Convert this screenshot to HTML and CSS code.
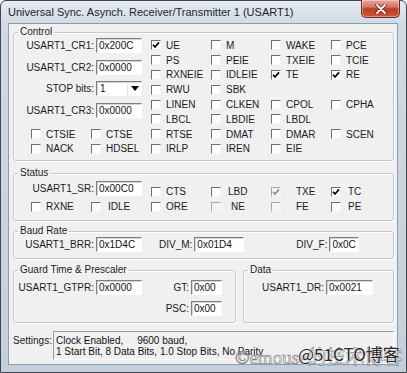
FILE: index.html
```html
<!DOCTYPE html>
<html lang="en">
<head>
    <meta charset="UTF-8">
    <title>USART1</title>
    <link rel="stylesheet" href="styles.css">
</head>
<body>
    <div class="window">
        <div class="titlebar">
            <span class="title">Universal Sync. Asynch. Receiver/Transmitter 1 (USART1)</span>
            <button class="close">
                <svg width="12" height="10" viewBox="0 0 12 10">
                    <path d="M2 1 L10 9 M10 1 L2 9" stroke="#5a2018" stroke-width="3.4" stroke-linecap="round"/>
                    <path d="M2 1 L10 9 M10 1 L2 9" stroke="#fff" stroke-width="1.8" stroke-linecap="round"/>
                </svg>
            </button>
        </div>

        <div class="client">
            <!-- Control -->
            <fieldset class="group control">
                <legend>Control</legend>
                <div class="group-body">
                    <div class="control-top">
                        <div class="fields">
                            <div class="field"><span class="lbl">USART1_CR1:</span><span class="edit">0x200C</span></div>
                            <div class="field"><span class="lbl">USART1_CR2:</span><span class="edit">0x0000</span></div>
                            <div class="field"><span class="lbl">STOP bits:</span><span class="combo"><span class="combo-val">1</span><span class="arrow"></span></span></div>
                            <div class="field"><span class="lbl">USART1_CR3:</span><span class="edit">0x0000</span></div>
                        </div>
                        <div class="checks cols4">
                            <label class="chk"><span class="box"><svg viewBox="0 0 8 8"><path d="M1 3.8 L3 6 L7 1.4"/></svg></span>UE</label>
                            <label class="chk"><span class="box"></span>M</label>
                            <label class="chk"><span class="box"></span>WAKE</label>
                            <label class="chk"><span class="box"></span>PCE</label>

                            <label class="chk"><span class="box"></span>PS</label>
                            <label class="chk"><span class="box"></span>PEIE</label>
                            <label class="chk"><span class="box"></span>TXEIE</label>
                            <label class="chk"><span class="box"></span>TCIE</label>

                            <label class="chk"><span class="box"></span>RXNEIE</label>
                            <label class="chk"><span class="box"></span>IDLEIE</label>
                            <label class="chk"><span class="box"><svg viewBox="0 0 8 8"><path d="M1 3.8 L3 6 L7 1.4"/></svg></span>TE</label>
                            <label class="chk"><span class="box"><svg viewBox="0 0 8 8"><path d="M1 3.8 L3 6 L7 1.4"/></svg></span>RE</label>

                            <label class="chk"><span class="box"></span>RWU</label>
                            <label class="chk"><span class="box"></span>SBK</label>
                            <span></span>
                            <span></span>

                            <label class="chk"><span class="box"></span>LINEN</label>
                            <label class="chk"><span class="box"></span>CLKEN</label>
                            <label class="chk"><span class="box"></span>CPOL</label>
                            <label class="chk"><span class="box"></span>CPHA</label>

                            <label class="chk"><span class="box"></span>LBCL</label>
                            <label class="chk"><span class="box"></span>LBDIE</label>
                            <label class="chk"><span class="box"></span>LBDL</label>
                            <span></span>
                        </div>
                    </div>
                    <div class="checks cols6">
                        <label class="chk"><span class="box"></span>CTSIE</label>
                        <label class="chk"><span class="box"></span>CTSE</label>
                        <label class="chk"><span class="box"></span>RTSE</label>
                        <label class="chk"><span class="box"></span>DMAT</label>
                        <label class="chk"><span class="box"></span>DMAR</label>
                        <label class="chk"><span class="box"></span>SCEN</label>

                        <label class="chk"><span class="box"></span>NACK</label>
                        <label class="chk"><span class="box"></span>HDSEL</label>
                        <label class="chk"><span class="box"></span>IRLP</label>
                        <label class="chk"><span class="box"></span>IREN</label>
                        <label class="chk"><span class="box"></span>EIE</label>
                        <span></span>
                    </div>
                </div>
            </fieldset>

            <!-- Status -->
            <fieldset class="group status">
                <legend>Status</legend>
                <div class="group-body">
                    <div class="status-grid">
                        <div class="field wide"><span class="lbl">USART1_SR:</span><span class="edit">0x00C0</span></div>
                        <label class="chk low"><span class="box"></span>CTS</label>
                        <label class="chk low pad1"><span class="box"></span>LBD</label>
                        <label class="chk low pad3 dis"><span class="box"><svg viewBox="0 0 8 8"><path d="M1 3.8 L3 6 L7 1.4"/></svg></span>TXE</label>
                        <label class="chk low pad1"><span class="box"><svg viewBox="0 0 8 8"><path d="M1 3.8 L3 6 L7 1.4"/></svg></span>TC</label>

                        <label class="chk"><span class="box"></span>RXNE</label>
                        <label class="chk pad1"><span class="box"></span>IDLE</label>
                        <label class="chk"><span class="box"></span>ORE</label>
                        <label class="chk pad2 dis"><span class="box"></span>NE</label>
                        <label class="chk pad3 dis"><span class="box"></span>FE</label>
                        <label class="chk pad1"><span class="box"></span>PE</label>
                    </div>
                </div>
            </fieldset>

            <!-- Baud Rate -->
            <fieldset class="group baud">
                <legend>Baud Rate</legend>
                <div class="group-body row">
                    <div class="field wide"><span class="lbl">USART1_BRR:</span><span class="edit">0x1D4C</span></div>
                    <div class="field div-m"><span class="lbl">DIV_M:</span><span class="edit w50">0x01D4</span></div>
                    <div class="field div-f"><span class="lbl">DIV_F:</span><span class="edit w30">0x0C</span></div>
                </div>
            </fieldset>

            <div class="bottom-groups">
                <!-- Guard Time & Prescaler -->
                <fieldset class="group guard">
                    <legend>Guard Time &amp; Prescaler</legend>
                    <div class="group-body row">
                        <div class="field wide"><span class="lbl">USART1_GTPR:</span><span class="edit">0x0000</span></div>
                        <div class="small-fields">
                            <div class="field"><span class="lbl">GT:</span><span class="edit w31">0x00</span></div>
                            <div class="field"><span class="lbl">PSC:</span><span class="edit w31">0x00</span></div>
                        </div>
                    </div>
                </fieldset>

                <!-- Data -->
                <fieldset class="group data">
                    <legend>Data</legend>
                    <div class="group-body row">
                        <div class="field"><span class="lbl">USART1_DR:</span><span class="edit w47">0x0021</span></div>
                    </div>
                </fieldset>
            </div>

            <div class="settings">
                <span class="settings-lbl">Settings:</span>
                <div class="settings-box">Clock Enabled,     9600 baud,
1 Start Bit, 8 Data Bits, 1.0 Stop Bits, No Parity</div>
            </div>
        </div>

        <div class="wm-back">©emouse的技术博客</div>
        <div class="wm-front">@51CTO博客</div>
    </div>
</body>
</html>
```

FILE: styles.css
```css
* {
    box-sizing: border-box;
}

body {
    margin: 0;
    font-family: "Liberation Sans", Arial, sans-serif;
    font-size: 10px;
    color: #1b1b1b;
    background: #ffffff;
}

.window {
    position: relative;
    width: 407px;
    height: 373px;
    border: 1px solid #40474f;
    border-radius: 6px 6px 0 0;
    background: linear-gradient(#e4ebf3, #d0dae5 24px, #c3cfdc);
    padding: 0 8px 7px 7px;
    display: flex;
    flex-direction: column;
}

.titlebar {
    height: 22px;
    display: flex;
    align-items: center;
}

.title {
    font-size: 11px;
    color: #1e1e2c;
    white-space: nowrap;
}

.close {
    align-self: flex-start;
    margin: -1px -2px 0 auto;
    width: 39px;
    height: 18px;
    padding: 0;
    border: 1px solid #6e2c23;
    border-top: none;
    border-radius: 0 0 5px 5px;
    background: linear-gradient(#e8a99c, #d47a66 40%, #bf3e24 52%, #c9563c);
    display: flex;
    align-items: center;
    justify-content: center;
    box-shadow: inset 0 0 0 1px rgba(255, 255, 255, 0.35);
}

.client {
    flex: 1;
    background: #f0f0f0;
    border: 1px solid #8f9dab;
    padding: 0 3px 0 4px;
    display: flex;
    flex-direction: column;
}

/* group boxes */
.group {
    margin: 0;
    padding: 0;
    min-width: 0;
    border: 1px solid #c2c7cc;
    border-radius: 3px;
    box-shadow: inset 1px 1px 0 #ffffff, 1px 1px 0 #ffffff;
}

.group legend {
    margin-left: 4px;
    padding: 0 2px;
    line-height: 12px;
}

.group-body {
    padding-left: 17px;
}

.row {
    display: flex;
    align-items: flex-start;
}

.control {
    margin-top: 2px;
}

.control .group-body {
    padding-bottom: 4px;
}

.status {
    margin-top: 6px;
}

.status .group-body {
    padding-top: 2px;
    padding-bottom: 6px;
}

.baud {
    margin-top: 4px;
}

.baud .group-body {
    padding-bottom: 6px;
}

.bottom-groups {
    display: flex;
    gap: 7px;
    margin-top: 5px;
}

.guard {
    width: 223px;
}

.guard .group-body,
.data .group-body {
    padding-top: 4px;
    padding-bottom: 6px;
}

.data {
    flex: 1;
}

/* label + edit */
.field {
    display: flex;
    align-items: center;
    justify-content: flex-end;
    gap: 2px;
    height: 15px;
}

.fields {
    width: 120px;
    display: flex;
    flex-direction: column;
    gap: 6.5px;
}

.fields .field,
.field.wide {
    width: 120px;
    padding-right: 9px;
}

.lbl {
    white-space: nowrap;
    flex-shrink: 0;
}

.edit,
.combo {
    width: 46px;
    height: 15px;
    flex-shrink: 0;
    background: #ffffff;
    border: 1px solid;
    border-color: #7f7f7f #ffffff #ffffff #7f7f7f;
    box-shadow: inset 1px 1px 0 #d4d4d4;
    padding-left: 2px;
    line-height: 13px;
    color: #111111;
}

.w50 { width: 50px; }
.w30 { width: 30px; }
.w31 { width: 31px; }
.w47 { width: 47px; }

.combo {
    display: flex;
    justify-content: space-between;
    padding: 0;
}

.combo-val {
    padding-left: 3px;
}

.arrow {
    width: 14px;
    height: 13px;
    border-left: 1px solid #e4e4e4;
    position: relative;
}

.arrow::after {
    content: "";
    position: absolute;
    left: 3px;
    top: 4px;
    border-left: 4px solid transparent;
    border-right: 4px solid transparent;
    border-top: 5px solid #000000;
}

.div-m {
    margin-left: 8px;
}

.div-f {
    margin-left: 52px;
}

.small-fields {
    width: 71px;
    display: flex;
    flex-direction: column;
    align-items: flex-end;
    gap: 6px;
}

.data .group-body {
    padding-left: 18px;
}

/* checkboxes */
.control-top {
    display: flex;
}

.checks {
    display: grid;
    grid-auto-rows: 14.8px;
}

.cols4 {
    grid-template-columns: repeat(4, 60px);
}

.cols6 {
    grid-template-columns: repeat(6, 60px);
}

.chk {
    display: flex;
    align-items: center;
    gap: 5px;
    white-space: nowrap;
}

.chk.pad1 { gap: 7px; }
.chk.pad2 { gap: 10px; }
.chk.pad3 { gap: 15px; }

.box {
    width: 10px;
    height: 10px;
    flex-shrink: 0;
    background: #fdfdfd;
    border: 1px solid;
    border-color: #6f6f6f #f4f4f4 #f4f4f4 #6f6f6f;
    display: flex;
}

.box svg {
    width: 8px;
    height: 8px;
}

.box path {
    fill: none;
    stroke: #000000;
    stroke-width: 1.7;
}

.chk.dis .box {
    border-color: #a8a8a8 #f4f4f4 #f4f4f4 #a8a8a8;
    background: #f4f4f4;
}

.chk.dis .box path {
    stroke: #8c8c8c;
}

.status-grid {
    display: grid;
    grid-template-columns: repeat(6, 60px);
    grid-template-rows: 18px 15px;
}

.status-grid .wide {
    grid-column: span 2;
    align-self: start;
}

.chk.low {
    align-self: end;
    height: 14.8px;
}

/* settings */
.settings {
    display: flex;
    align-items: flex-start;
    margin-top: 8px;
}

.settings-lbl {
    margin-top: 4px;
    width: 40px;
    white-space: nowrap;
}

.settings-box {
    flex: 1;
    height: 29px;
    border: 1px solid;
    border-color: #9a9a9a #ffffff #ffffff #9a9a9a;
    padding: 3px 2px 0;
    line-height: 11px;
    white-space: pre;
    color: #111111;
}

/* watermark over the bottom right corner */
.wm-back {
    position: absolute;
    left: 234px;
    top: 346px;
    font-family: "Liberation Serif", "Noto Sans CJK SC", serif;
    font-size: 19px;
    line-height: 22px;
    color: rgba(255, 255, 255, 0.6);
    -webkit-text-stroke: 0.7px #8a8a8a;
    white-space: nowrap;
}

.wm-front {
    position: absolute;
    left: 297px;
    top: 342px;
    font-family: "Noto Sans CJK SC", sans-serif;
    font-size: 17px;
    line-height: 22px;
    color: #2a2a2a;
    text-shadow: 0 0 2px #ffffff, 0 0 2px #ffffff;
    white-space: nowrap;
}
```
